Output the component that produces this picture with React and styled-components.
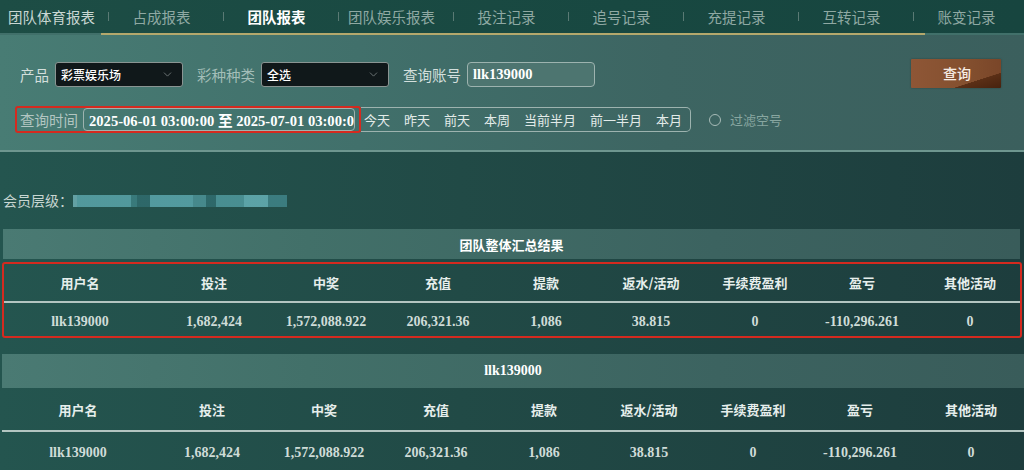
import React from "react";
import styled, { createGlobalStyle } from "styled-components";
import { ChevronDown } from "lucide-react";

// Data
const tabs = [
  { label: "团队体育报表", tone: "first" },
  { label: "占成报表" },
  { label: "团队报表", tone: "active" },
  { label: "团队娱乐报表" },
  { label: "投注记录" },
  { label: "追号记录" },
  { label: "充提记录" },
  { label: "互转记录" },
  { label: "账变记录" },
];

const quickRanges = ["今天", "昨天", "前天", "本周", "当前半月", "前一半月", "本月"];

const columns = ["用户名", "投注", "中奖", "充值", "提款", "返水/活动", "手续费盈利", "盈亏", "其他活动"];
const row = ["llk139000", "1,682,424", "1,572,088.922", "206,321.36", "1,086", "38.815", "0", "-110,296.261", "0"];

const App = () => {
  return (
    <>
      <GlobalStyle />
      <Page>
        <TabBar>
          {tabs.map((tab, index) => (
            <Tab key={`${index}tab`} $tone={tab.tone} $sep={index > 0}>
              {tab.label}
            </Tab>
          ))}
        </TabBar>
        <UnderlineTrack>
          <GoldLine />
        </UnderlineTrack>

        <FilterPanel>
          <FilterRow>
            <Label>产品</Label>
            <Select>
              <span>彩票娱乐场</span>
              <ChevronDown size={13} strokeWidth={1.5} color="#7d8585" />
            </Select>
            <Label $muted $gap>
              彩种种类
            </Label>
            <Select>
              <span>全选</span>
              <ChevronDown size={13} strokeWidth={1.5} color="#7d8585" />
            </Select>
            <Label $gap>查询账号</Label>
            <AccountInput>llk139000</AccountInput>
            <QueryButton>查询</QueryButton>
          </FilterRow>
          <FilterRow $second>
            <Highlight>
              <Label $dim>查询时间</Label>
              <DateInput>2025-06-01 03:00:00 至 2025-07-01 03:00:00</DateInput>
            </Highlight>
            <QuickGroup>
              {quickRanges.map((q) => (
                <QuickItem key={q}>{q}</QuickItem>
              ))}
            </QuickGroup>
            <Radio />
            <RadioLabel>过滤空号</RadioLabel>
          </FilterRow>
        </FilterPanel>

        <MemberRow>
          <span>会员层级：</span>
          <Mosaic />
        </MemberRow>

        <Section>
          <SectionTitle $height={30} $inset>
            团队整体汇总结果
          </SectionTitle>
          <Table $highlight>
            <HeaderRow $height={39}>
              {columns.map((c) => (
                <HeadCell key={c}>{c}</HeadCell>
              ))}
            </HeaderRow>
            <DataRow $height={33}>
              {row.map((v, i) => (
                <DataCell key={`${i}r1`}>{v}</DataCell>
              ))}
            </DataRow>
          </Table>
        </Section>

        <Section $second>
          <SectionTitle $height={34} $serif>
            llk139000
          </SectionTitle>
          <Table>
            <HeaderRow $height={44}>
              {columns.map((c) => (
                <HeadCell key={c}>{c}</HeadCell>
              ))}
            </HeaderRow>
            <DataRow $height={36}>
              {row.map((v, i) => (
                <DataCell key={`${i}r2`}>{v}</DataCell>
              ))}
            </DataRow>
          </Table>
        </Section>
      </Page>
    </>
  );
};

export default App;

const GlobalStyle = createGlobalStyle`
  html, body {
    margin: 0;
    padding: 0;
    background: #1e4340;
  }
  body {
    font-family: "Noto Sans CJK SC", "Noto Sans", sans-serif;
  }
  * {
    box-sizing: border-box;
  }
`;

const Page = styled.div`
  width: 1024px;
  height: 470px;
  overflow: hidden;
  background: linear-gradient(90deg, #24554f 0%, #214a46 45%, #1d3d3d 100%);
`;

const TabBar = styled.div`
  display: grid;
  grid-template-columns: 104px repeat(8, 115px) 1fr;
  height: 33px;
  background: linear-gradient(90deg, #1d4d45, #184841 60%, #17453f);
`;

const Tab = styled.div`
  position: relative;
  display: flex;
  align-items: center;
  justify-content: ${({ $tone }) => ($tone === "first" ? "flex-start" : "center")};
  padding-left: ${({ $tone }) => ($tone === "first" ? "8px" : "0")};
  padding-bottom: 1px;
  font-size: 14.5px;
  white-space: nowrap;
  color: ${({ $tone }) =>
    $tone === "active" ? "#ffffff" : $tone === "first" ? "#c9d7d3" : "#8fa9a3"};
  font-weight: ${({ $tone }) => ($tone === "active" ? 700 : 400)};

  &::before {
    content: "";
    display: ${({ $sep }) => ($sep ? "block" : "none")};
    position: absolute;
    left: 4px;
    top: 12px;
    width: 1px;
    height: 9px;
    background: #5a7a74;
  }
`;

const UnderlineTrack = styled.div`
  height: 2px;
  background: #41706a;
  display: flex;
`;

const GoldLine = styled.div`
  margin-left: 101px;
  width: 824px;
  background: #b4a86c;
`;

const FilterPanel = styled.div`
  height: 117px;
  padding: 27px 0 0 20px;
  background: linear-gradient(90deg, #487c74 0%, #41706b 35%, #3d6562 65%, #3b5f5d 100%);
  border-bottom: 2px solid #6e968f;
`;

const FilterRow = styled.div`
  display: flex;
  align-items: center;
  height: ${({ $second }) => ($second ? "27px" : "25px")};
  margin-top: ${({ $second }) => ($second ? "19px" : "0")};
  margin-left: ${({ $second }) => ($second ? "-5px" : "0")};
`;

const Label = styled.span`
  font-size: 14.5px;
  color: ${({ $muted, $dim }) => ($muted ? "#a3beb8" : $dim ? "#b3c6c2" : "#d3dfdc")};
  margin-left: ${({ $gap }) => ($gap ? "14px" : "0")};
  margin-right: ${({ $dim }) => ($dim ? "5px" : "6px")};
  white-space: nowrap;
`;

const Select = styled.div`
  width: 128px;
  height: 25px;
  display: flex;
  align-items: center;
  justify-content: space-between;
  padding: 0 8px 0 5px;
  background: #10181a;
  border: 1px solid #8a9593;
  border-radius: 3px;
  color: #ffffff;
  font-size: 12px;
  font-weight: 500;
`;

const AccountInput = styled.div`
  width: 128px;
  height: 25px;
  display: flex;
  align-items: center;
  padding: 0 5px;
  background: #4d7570;
  border: 1px solid #9db3af;
  border-radius: 4px;
  color: #ffffff;
  font-family: "Liberation Serif", serif;
  font-weight: 700;
  font-size: 14.5px;
`;

const QueryButton = styled.button`
  margin-left: auto;
  margin-right: 23px;
  margin-top: -3px;
  width: 90px;
  height: 29px;
  border: none;
  border-radius: 1px;
  color: #f6ece4;
  font-family: "Noto Sans CJK SC", sans-serif;
  font-size: 14px;
  font-weight: 500;
  padding: 0 0 0 2px;
  background:
    linear-gradient(to top left, #47220e 0%, #5b2f16 26%, transparent 26.5%),
    linear-gradient(90deg, #8e5636 0%, #84502f 60%, #7a4629 100%);
  box-shadow: 0 0 2px rgba(0, 0, 0, 0.35);
`;

const Highlight = styled.div`
  display: flex;
  align-items: center;
  height: 27px;
  padding: 0 4px 0 3px;
  border: 2px solid #d52a1f;
  border-radius: 3px;
`;

const DateInput = styled.div`
  width: 272px;
  height: 23px;
  display: flex;
  align-items: center;
  padding: 0 0 0 5px;
  border: 1px solid #9db3af;
  border-radius: 4px;
  color: #ffffff;
  font-family: "Liberation Serif", "Noto Sans CJK SC", serif;
  font-weight: 700;
  font-size: 14.6px;
  white-space: nowrap;
  overflow: hidden;
`;

const QuickGroup = styled.div`
  display: flex;
  align-items: center;
  gap: 14px;
  height: 25px;
  padding: 0 8px 0 3px;
  border: 1px solid #9db3af;
  border-left: none;
  border-radius: 0 5px 5px 0;
`;

const QuickItem = styled.span`
  font-size: 13px;
  color: #e3ebe9;
  white-space: nowrap;
`;

const Radio = styled.span`
  width: 12px;
  height: 12px;
  margin-left: 18px;
  border: 1px solid #a7bbb7;
  border-radius: 50%;
`;

const RadioLabel = styled.span`
  margin-left: 9px;
  font-size: 13px;
  color: #88a6a0;
`;

const MemberRow = styled.div`
  height: 77px;
  display: flex;
  align-items: center;
  padding: 18px 0 0 3px;
  font-size: 14px;
  color: #c8d6d2;
`;

const Mosaic = styled.div`
  width: 214px;
  height: 12px;
  margin-top: 3px;
  opacity: 0.9;
  background: linear-gradient(
    90deg,
    #6aa9ad 0 2%,
    #57a0a5 2% 27%,
    #3b7e80 27% 30%,
    #2f6a6c 30% 36%,
    #58a2a8 36% 56%,
    #4a8f93 56% 62%,
    #2f6b6d 62% 67%,
    #4d9599 67% 80%,
    #62acb1 80% 91%,
    #3e8185 91% 100%
  );
`;

const Section = styled.div`
  margin-top: ${({ $second }) => ($second ? "16px" : "0")};
`;

const SectionTitle = styled.div`
  height: ${({ $height }) => $height}px;
  margin: ${({ $inset }) => ($inset ? "0 4px 0 3px" : "0 0 0 2px")};
  display: flex;
  align-items: center;
  justify-content: center;
  color: #ffffff;
  font-weight: 700;
  font-size: ${({ $serif }) => ($serif ? "14px" : "13px")};
  font-family: ${({ $serif }) =>
    $serif ? `"Liberation Serif", serif` : `"Noto Sans CJK SC", sans-serif`};
  background: linear-gradient(90deg, #4a7a73 0%, #427069 30%, #3c6360 70%, #395c5a 100%);
`;

const Table = styled.div`
  margin: ${({ $highlight }) => ($highlight ? "3px 2px 0 2px" : "0 0 0 2px")};
  border: ${({ $highlight }) => ($highlight ? "2px solid #d52a1f" : "none")};
  border-radius: ${({ $highlight }) => ($highlight ? "3px" : "0")};
`;

const gridCols = "152px 116px 108px 116px 100px 110px 98px 116px 1fr";

const HeaderRow = styled.div`
  display: grid;
  grid-template-columns: ${gridCols};
  height: ${({ $height }) => $height}px;
  align-items: center;
  border-bottom: 2px solid #b3c5c1;
`;

const HeadCell = styled.div`
  text-align: center;
  font-size: 13px;
  font-weight: 700;
  color: #e6eeec;
  white-space: nowrap;
`;

const DataRow = styled.div`
  display: grid;
  grid-template-columns: ${gridCols};
  height: ${({ $height }) => $height}px;
  padding-top: 5px;
  align-items: center;
`;

const DataCell = styled.div`
  text-align: center;
  font-family: "Liberation Serif", serif;
  font-weight: 700;
  font-size: 14px;
  color: #cfdcd8;
  white-space: nowrap;
`;
